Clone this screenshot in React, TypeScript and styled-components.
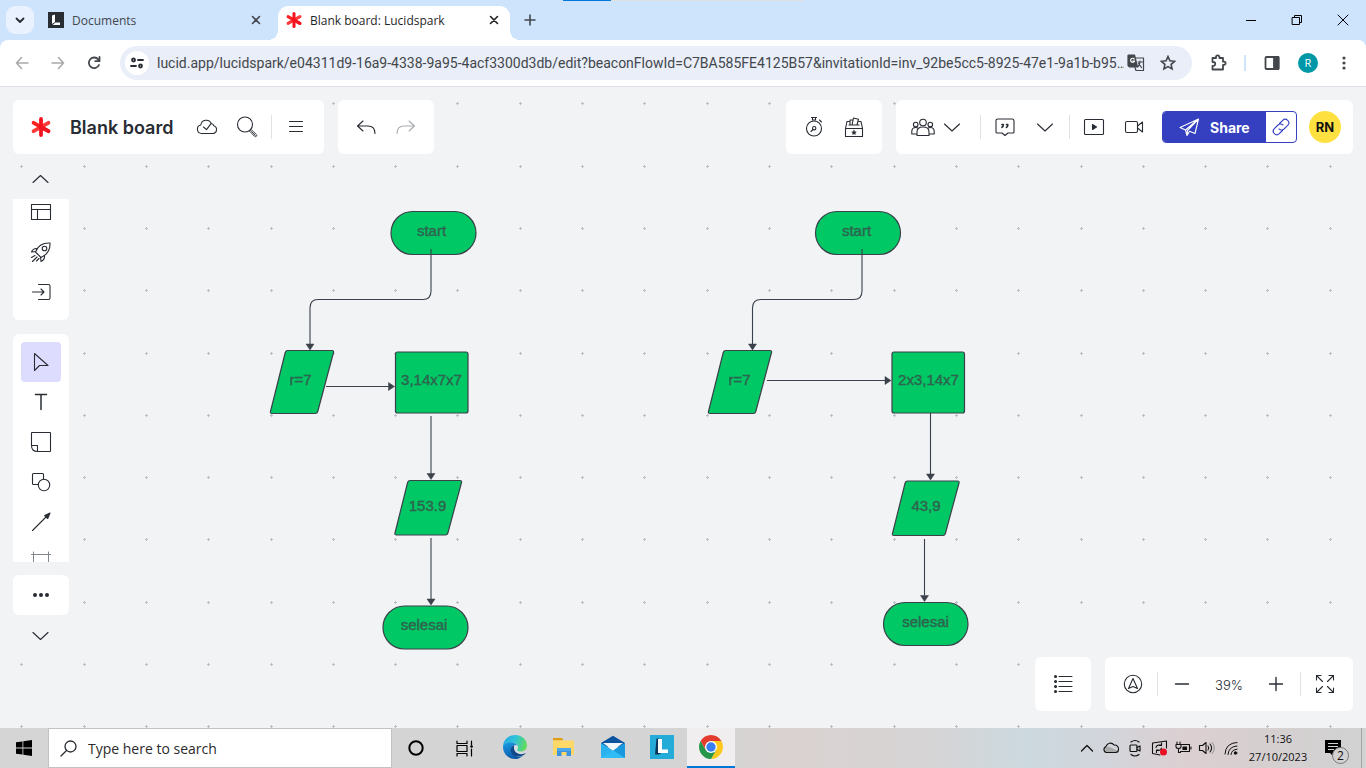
import React from 'react';
import styled, { createGlobalStyle } from 'styled-components';

const GlobalStyle = createGlobalStyle`
  * { box-sizing: border-box; }
  html, body { margin: 0; padding: 0; }
  body { font-family: "Open Sans", "Noto Sans", sans-serif; color: #282c33; }
  button, input { font: inherit; color: inherit; }
  button { border: 0; padding: 0; background: none; cursor: pointer; }
  svg { display: block; flex: none; }
`;

const Page = styled.div`
  min-height: 100vh;
  display: flex;
  flex-direction: column;
`;

/* ---------- browser ---------- */

const TabStrip = styled.header`
  position: relative;
  display: flex;
  align-items: center;
  height: 40px;
  background: #cee3fc;
`;

const LoadBar = styled.div`
  position: absolute;
  top: 0;
  left: 563px;
  width: 241px;
  height: 1px;
  background: linear-gradient(90deg, #0078d7 20%, #dfe0e0 20%);
`;

const IconButton = styled.button<{ $w?: number; $h?: number; $color?: string }>`
  display: flex;
  flex: none;
  align-items: center;
  justify-content: center;
  width: ${p => p.$w ?? 40}px;
  height: ${p => p.$h ?? 40}px;
  color: ${p => p.$color ?? '#282c33'};
`;

const TabSearch = styled(IconButton)`
  margin: 0 6px;
  border-radius: 9px;
  background: #e8f1fd;
`;

const Tab = styled.div<{ $active?: boolean }>`
  position: relative;
  display: flex;
  align-items: center;
  gap: 8px;
  width: ${p => (p.$active ? 232 : 238)}px;
  height: 34px;
  margin-top: 6px;
  padding: 0 ${p => (p.$active ? 8 : 14)}px 6px 8px;
  border-radius: 10px 10px 0 0;
  background: ${p => (p.$active ? '#fff' : 'transparent')};
  color: ${p => (p.$active ? '#1f1f1f' : '#42474e')};
  font-size: 12px;
  line-height: 16px;
  ${p =>
    p.$active &&
    `
    &::before, &::after {
      content: '';
      position: absolute;
      bottom: 0;
      width: 10px;
      height: 10px;
    }
    &::before { left: -10px; background: radial-gradient(circle at 0 0, transparent 10px, #fff 10px); }
    &::after { right: -10px; background: radial-gradient(circle at 100% 0, transparent 10px, #fff 10px); }
  `}
`;

const TabTitle = styled.span`
  flex: 1;
  padding-top: 1px;
  white-space: nowrap;
`;

const Spacer = styled.div`
  flex: 1;
`;

const ToolbarBack = styled.div`
  background: #cee3fc;
`;

const BrowserBar = styled.div`
  display: flex;
  align-items: center;
  height: 47px;
  padding: 0 4px;
  border-bottom: 1px solid #dcdfe3;
  border-radius: 8px 8px 0 0;
  background: #fff;
`;

const Omnibox = styled.div`
  display: flex;
  flex: 1;
  align-items: center;
  height: 34px;
  min-width: 0;
  margin: 0 9px 0 8px;
  padding: 0 4px 0 5px;
  border-radius: 17px;
  background: #e9eef8;
`;

const SiteButton = styled(IconButton)`
  border-radius: 50%;
  background: #fff;
`;

const UrlInput = styled.input`
  flex: 1;
  min-width: 0;
  margin-left: 8px;
  padding: 0;
  border: 0;
  outline: 0;
  background: transparent;
  color: #43474c;
  font-family: Roboto, sans-serif;
  font-size: 14px;
  line-height: 20px;
`;

const BarDivider = styled.div`
  width: 2px;
  height: 16px;
  margin: 0 8px 0 7px;
  background: #cee3fc;
`;

const Profile = styled.span`
  width: 20px;
  height: 20px;
  border-radius: 50%;
  background: #0097a7;
  color: #fff;
  font-size: 11px;
  line-height: 20px;
  text-align: center;
`;

/* ---------- board ---------- */

const Board = styled.main`
  position: relative;
  display: flex;
  flex: 1;
  flex-direction: column;
  padding: 13px 13px 17px;
  overflow: hidden;
  background: #f1f3f5;
  font-family: Inter, "Liberation Sans", sans-serif;
`;

const Drawing = styled.svg`
  position: absolute;
  inset: 0;
  width: 100%;
  height: 100%;
`;

const NodeLabel = styled.text`
  font-family: "Liberation Sans", Arial, sans-serif;
  font-size: 15px;
  fill: #2f644f;
  stroke: #2f644f;
  stroke-width: 0.4;
  text-anchor: middle;
`;

const Row = styled.div<{ $align?: string }>`
  position: relative;
  display: flex;
  align-items: ${p => p.$align ?? 'center'};
  justify-content: space-between;
`;

const BodyRow = styled(Row)`
  flex: 1;
`;

const Group = styled.div`
  display: flex;
  gap: 14px;
`;

const Panel = styled.div<{ $end?: number }>`
  display: flex;
  align-items: center;
  height: 54px;
  padding: 0 ${p => p.$end ?? 8}px 0 8px;
  border-radius: 6px;
  background: #fff;
`;

const BoardTitle = styled.h1`
  width: 117px;
  margin: 0 0 0 9px;
  padding-top: 2px;
  color: #282c33;
  font-size: 18px;
  font-weight: 600;
  line-height: 24px;
  white-space: nowrap;
`;

const Divider = styled.div<{ $before?: number }>`
  width: 1px;
  height: 24px;
  margin: 0 4px 0 ${p => p.$before ?? 4}px;
  background: #dfe3e8;
`;

const ShareGroup = styled.div`
  display: flex;
  height: 32px;
  margin: 0 12px 0 8px;
  overflow: hidden;
  border: 1px solid #3440c0;
  border-radius: 4px;
`;

const ShareButton = styled.button`
  display: flex;
  align-items: center;
  gap: 10px;
  width: 103px;
  padding-left: 16px;
  background: #3440c0;
  color: #fff;
  font-size: 14px;
  font-weight: 700;
`;

const Avatar = styled.button`
  width: 32px;
  height: 32px;
  border-radius: 50%;
  background: #ffe041;
  color: #111;
  font-size: 13px;
  font-weight: 700;
`;

const Rail = styled.nav`
  display: flex;
  flex-direction: column;
  align-self: flex-start;
  align-items: center;
  width: 56px;
  padding-top: 5px;
`;

const ToolGroup = styled.div<{ $edge: 'top' | 'bottom' }>`
  display: flex;
  flex-direction: column;
  align-items: center;
  width: 56px;
  padding: ${p => (p.$edge === 'top' ? '0 0 8px' : '8px 0 0')};
  border-radius: ${p => (p.$edge === 'top' ? '0 0 6px 6px' : '6px 6px 0 0')};
  margin-bottom: ${p => (p.$edge === 'top' ? 14 : 13)}px;
  background: #fff;
`;

const Tool = styled(IconButton)<{ $on?: boolean; $cut?: 'top' | 'bottom' }>`
  height: ${p => (p.$cut === 'top' ? 33 : p.$cut === 'bottom' ? 20 : 40)}px;
  align-items: ${p => (p.$cut === 'top' ? 'flex-end' : p.$cut === 'bottom' ? 'flex-start' : 'center')};
  padding: ${p => (p.$cut === 'top' ? '0 0 8px' : p.$cut === 'bottom' ? '8px 0 0' : '0')};
  overflow: hidden;
  border-radius: 4px;
  background: ${p => (p.$on ? '#dddcff' : 'transparent')};
`;

const MoreButton = styled(IconButton)`
  border-radius: 6px;
  background: #fff;
`;

const BottomPanels = styled(Group)`
  align-self: flex-end;
`;

const ZoomLevel = styled.output`
  width: 54px;
  padding-top: 2px;
  color: #282c33;
  font-size: 13px;
  font-weight: 300;
  text-align: center;
`;

/* ---------- taskbar ---------- */

const Taskbar = styled.footer`
  display: flex;
  align-items: center;
  height: 40px;
  background: linear-gradient(90deg, #d5d5d5 0%, #d4d4d4 52%, #dad2d1 58%, #d6d4d5 68%, #ccd9df 75%, #d2d5db 81%, #dccfd1 87%, #d6cfd0 92%, #d1d2d2 100%);
`;

const SearchBox = styled.label`
  display: flex;
  align-items: center;
  gap: 11px;
  width: 344px;
  height: 40px;
  padding-left: 11px;
  border: 1px solid #c2c2c2;
  background: #fff;
`;

const SearchInput = styled.input`
  flex: 1;
  min-width: 0;
  padding: 2px 0 0;
  border: 0;
  outline: 0;
  background: transparent;
  font-size: 14px;
  line-height: 20px;
  &::placeholder { color: #2b2b2b; opacity: 1; }
`;

const Apps = styled.div`
  display: flex;
  gap: 1px;
  margin-left: 3px;
`;

const AppButton = styled(IconButton)<{ $active?: boolean }>`
  border-bottom: 2px solid ${p => (p.$active ? '#0078d7' : 'transparent')};
  background: ${p => (p.$active ? '#f0eeee' : 'transparent')};
`;

const Clock = styled.time`
  width: 70px;
  color: #111;
  font-size: 11px;
  line-height: 18px;
  text-align: center;
`;

const NoticeButton = styled(IconButton)`
  position: relative;
`;

const NoticeCount = styled.span`
  position: absolute;
  right: 12px;
  bottom: 4px;
  width: 17px;
  height: 17px;
  border: 1px solid #777;
  border-radius: 50%;
  background: #d3d1d2;
  color: #111;
  font-size: 12px;
  line-height: 15px;
  text-align: center;
`;

const ShowDesktop = styled.button`
  width: 5px;
  height: 40px;
  border-left: 1px solid #a2a2a2;
`;

/* ---------- icons ---------- */

type LineProps = { size?: number; sw?: number; children: React.ReactNode };

/* Stroke icon on a square grid as wide as it is drawn. */
const Line = ({ size = 24, sw = 1.1, children }: LineProps) => (
  <svg width={size} height={size} viewBox={`0 0 ${size} ${size}`} fill="none" stroke="currentColor"
    strokeWidth={sw} strokeLinecap="round" strokeLinejoin="round" aria-hidden="true">
    {children}
  </svg>
);

const Asterisk = ({ size }: { size: number }) => (
  <svg width={size} height={size} viewBox="0 0 20 20" fill="none" strokeWidth="3.8" strokeLinecap="round" aria-hidden="true">
    <path d="M2.600 14.200 17.400 5.800" stroke="#ff3a3a" />
    <path d="M2.600 5.800 17.400 14.200" stroke="#ff2020" />
    <path d="M10 2v16" stroke="#f5141d" />
    <path d="M12 11.200l5.400 3" stroke="#ee1620" />
  </svg>
);

const Close = () => <Line size={10} sw={1.6}><path d="M1.500 1.500l7 7M8.500 1.500l-7 7" /></Line>;
const ChevronDown = () => <Line size={18}><path d="M1.500 6 9 13l7.500-7" /></Line>;

const Edge = () => (
  <svg width="24" height="24" viewBox="0 0 24 24" aria-hidden="true">
    <defs>
      <linearGradient id="edgeTop" x1="0" y1="0.3" x2="1" y2="0.5">
        <stop offset="0" stopColor="#2aa9e4" /><stop offset=".5" stopColor="#2fc3d6" /><stop offset="1" stopColor="#65dc57" />
      </linearGradient>
      <linearGradient id="edgeLow" x1="0" y1="0" x2="0.4" y2="1">
        <stop offset="0" stopColor="#1c9be6" /><stop offset="1" stopColor="#0b5aa8" />
      </linearGradient>
    </defs>
    <path d="M0 12C0 5.400 5.400 0 12 0s12 4.800 12 10.300c0 3.900-2.900 6.300-6 6.300-2.400 0-4-.8-4-1.700 0-.7 1-1.200 1-2.900 0-2.300-2.400-4.200-5.800-4.200C4.500 7.800.8 10 0 12z" fill="url(#edgeTop)" />
    <path d="M0 12c.6-2.600 3.800-4.600 8-4.500 3.200 0 6.200 1.600 6.600 4-1-1.200-2-1.400-3-1.200-4 .9-4.300 6-1.400 9 2.300 2.400 5.800 3 9.300 1.600C17.500 22.800 14.900 24 12 24 5.400 24 0 18.600 0 12z" fill="url(#edgeLow)" />
    <path d="M11.600 10.300c-4.500 1-5 6.400-1.800 9.400 3 2.700 8.700 2.600 12.500-.6.400-.4.100-1-.5-.7-3.600 1.500-7.400.7-9.300-1.800-1.500-2-1.800-4.500-.9-6.300z" fill="#114a8b" />
    <path d="M11.600 10.300c-1.200 2.500-.3 5.300 1.700 7.300 2.300 1.200 5.500.8 7-.6-3.600 0-6.300-.8-6.300-2 0-.7 1-1.300 1-3-.6-1.400-2-2-3.400-1.700z" fill="#d7dfe4" />
  </svg>
);

const Explorer = () => (
  <svg width="24" height="24" viewBox="0 0 24 24" aria-hidden="true">
    <path d="M1 3h9l1.500 2.500H1z" fill="#e09d13" />
    <path d="M1 5.500h21V20H1z" fill="#ffd868" />
    <path d="M5 13h14v8h-4.500v-4h-5v4H5z" fill="#3d93dc" />
    <path d="M5 13h14v3H5z" fill="#4aa8ef" />
  </svg>
);

const Mail = () => (
  <svg width="24" height="24" viewBox="0 0 24 24" aria-hidden="true">
    <path d="M0 8 12 .8 24 8v4H0z" fill="#0b539f" />
    <path d="M0 8l12 7.500L24 8v15H0z" fill="#2bb2ee" />
    <path d="M24 8 12 15.500 24 23z" fill="#1a98dd" />
    <path d="M12 15.500 24 23H0z" fill="#30bdf5" />
    <path d="M2 8h20l-10 7.500z" fill="#f2f6fa" />
  </svg>
);

const LApp = () => (
  <svg width="24" height="24" viewBox="0 0 24 24" aria-hidden="true">
    <path d="M0 0h24v24H0z" fill="#24abd8" />
    <path d="M6.500 3.500H9v12l2 2.500-2 1.500H5z" fill="#0b3558" />
    <path d="M8 4h4v10.500h6V18H8z" fill="#fff" />
  </svg>
);

const ChromeLogo = () => (
  <svg width="24" height="24" viewBox="0 0 24 24" aria-hidden="true">
    <path d="M12 12V6h10.390A12 12 0 0 1 12 24l5.200-9z" fill="#fdc81e" />
    <path d="M12 12l5.200 3L12 24A12 12 0 0 1 1.610 6l5.200 9z" fill="#26974a" />
    <path d="M1.610 6A12 12 0 0 1 22.390 6H12L6.800 15z" fill="#e33b2e" />
    <circle cx="12" cy="12" r="6" fill="#fff" />
    <circle cx="12" cy="12" r="4.700" fill="#3a7df0" />
  </svg>
);

/* ---------- diagram ---------- */

const GRID_STEP = 62.3;
const INK = '#3a414a';

const gridPath = () => {
  let d = '';
  for (let r = 0; r < 20; r++) {
    for (let c = 0; c < 45; c++) {
      const x = Math.floor(21.9 + c * GRID_STEP);
      const y = Math.floor(16.9 + r * GRID_STEP);
      d += `M${x - 1} ${y}.5h3M${x}.5 ${y - 1}v3`;
    }
  }
  return d;
};

type Shape = { kind: 'pill' | 'box' | 'data'; x: number; y: number; w: number; h: number; label: string; tx: number; ty: number };

const shapes: Shape[] = [
  { kind: 'pill', x: 391, y: 124.5, w: 85, h: 43, label: 'start', tx: 431.5, ty: 149 },
  { kind: 'data', x: 270, y: 263.5, w: 64, h: 63, label: 'r=7', tx: 300.5, ty: 298 },
  { kind: 'box', x: 395.5, y: 265, w: 72.5, h: 61, label: '3,14x7x7', tx: 431.5, ty: 298 },
  { kind: 'data', x: 394.5, y: 393.5, w: 67.5, h: 54.5, label: '153.9', tx: 427.5, ty: 424 },
  { kind: 'pill', x: 383, y: 519, w: 85, h: 43, label: 'selesai', tx: 424, ty: 543 },
  { kind: 'pill', x: 815.5, y: 124.5, w: 85, h: 43, label: 'start', tx: 856.5, ty: 149 },
  { kind: 'data', x: 708, y: 263.5, w: 64, h: 63, label: 'r=7', tx: 739.5, ty: 298 },
  { kind: 'box', x: 892, y: 265, w: 72.5, h: 61, label: '2x3,14x7', tx: 928.5, ty: 298 },
  { kind: 'data', x: 892, y: 394, w: 67.5, h: 54.5, label: '43,9', tx: 926, ty: 424 },
  { kind: 'pill', x: 883.5, y: 515.5, w: 84.5, h: 43, label: 'selesai', tx: 925.5, ty: 540 },
];

const connectors = [
  'M431 162v42q0 8.500-8 8.500H318q-8 0-8 8.500v36',
  'M326 299.500h63',
  'M431 329v58',
  'M431 451v61',
  'M862 162v42q0 8.500-8 8.500h-93q-8.500 0-8.500 8.500v36',
  'M767 293.500h119',
  'M930.500 326v61',
  'M924.500 452v56',
];

const heads = [
  'M306 257h8l-4 6z',
  'M388.500 295.500v8l6-4z',
  'M427 386.500h8l-4 6z',
  'M427 512h8l-4 6z',
  'M748.500 257h8l-4 6z',
  'M885 289.500v8l6-4z',
  'M926.500 387h8l-4 6z',
  'M920.500 508.500h8l-4 6z',
];

/* Parallelogram that leans by a quarter of its height, with eased corners. */
const leaning = ({ x, y, w, h }: Shape) => {
  const s = h / 4;
  return `M${x + s + 2} ${y}H${x + w - 2}q2 0 1.500 2L${x + w - s - 0.5} ${y + h - 2}q-.5 2-2.500 2H${x + 2}q-2 0-1.500-2L${x + s - 0.5} ${y + 2}q.5-2 2.500-2z`;
};

const Diagram = () => (
  <Drawing aria-label="Flowchart">
    <path d={gridPath()} stroke="#a9adb2" strokeWidth="1" opacity=".75" />
    {shapes.map((s, i) => (
      <g key={i} fill="#00c865" stroke={INK} strokeWidth="1.2">
        {s.kind === 'data'
          ? <path d={leaning(s)} />
          : <rect x={s.x} y={s.y} width={s.w} height={s.h} rx={s.kind === 'pill' ? 21.5 : 2} />}
      </g>
    ))}
    {connectors.map(d => <path key={d} d={d} fill="none" stroke={INK} strokeWidth="1.1" />)}
    {heads.map(d => <path key={d} d={d} fill={INK} stroke={INK} strokeWidth=".5" />)}
    {shapes.map((s, i) => <NodeLabel key={i} x={s.tx} y={s.ty}>{s.label}</NodeLabel>)}
  </Drawing>
);

/* ---------- sections ---------- */

const Browser = () => (
  <>
    <TabStrip>
      <LoadBar />
      <TabSearch $w={28} $h={28} aria-label="Search tabs"><Line size={10} sw={1.8}><path d="M1.500 3.500 5 7l3.500-3.500" /></Line></TabSearch>
      <Tab>
        <svg width="16" height="16" viewBox="0 0 16 16" aria-hidden="true">
          <path d="M0 0h16v16H0z" fill="#282c33" />
          <path d="M4 3.500l3-1v7.500l-3 2zM4.500 13l3-2.500H12V13z" fill="#fff" />
        </svg>
        <TabTitle>Documents</TabTitle>
        <IconButton $w={16} $h={16} $color="#42474e" aria-label="Close Documents"><Close /></IconButton>
      </Tab>
      <Tab $active>
        <Asterisk size={16} />
        <TabTitle>Blank board: Lucidspark</TabTitle>
        <IconButton $w={16} $h={16} $color="#1f1f1f" aria-label="Close Blank board"><Close /></IconButton>
      </Tab>
      <IconButton aria-label="New tab" $color="#42474e"><Line size={12} sw={1.6}><path d="M6 1v10M1 6h10" /></Line></IconButton>
      <Spacer />
      <IconButton $w={46} $color="#000" aria-label="Minimise"><Line size={10} sw={1}><path d="M0 5.500h10" /></Line></IconButton>
      <IconButton $w={46} $color="#000" aria-label="Restore"><Line size={12} sw={1}><path d="M1.500 3.500h7v7h-7zM3.500 3.500v-2h7v7h-2" /></Line></IconButton>
      <IconButton $w={46} $color="#000" aria-label="Close window"><Line size={12} sw={1}><path d="M1 1l10 10M11 1 1 11" /></Line></IconButton>
    </TabStrip>
    <ToolbarBack>
      <BrowserBar>
        <IconButton $w={36} $h={36} $color="#a8aaac" aria-label="Back"><Line size={14} sw={1.6}><path d="M13 7H1.500M6.500 1.500 1.500 7l5 5.500" /></Line></IconButton>
        <IconButton $w={36} $h={36} $color="#a8aaac" aria-label="Forward"><Line size={14} sw={1.6}><path d="M1 7h11.500M7.500 1.500l5 5.500-5 5.500" /></Line></IconButton>
        <IconButton $w={36} $h={36} $color="#43474c" aria-label="Reload"><Line size={14} sw={1.8}><path d="M12 9A5.300 5.300 0 1 1 11.300 3.500L12.500 5M12.500 1v4.200H8.300" /></Line></IconButton>
        <Omnibox>
          <SiteButton $w={24} $h={24} aria-label="Site information">
            <Line size={14} sw={1.8}><circle cx="3.500" cy="4" r="1.500" /><path d="M8 4h5M1 10h5" /><circle cx="10.500" cy="10" r="1.500" /></Line>
          </SiteButton>
          <UrlInput aria-label="Address" readOnly value="lucid.app/lucidspark/e04311d9-16a9-4338-9a95-4acf3300d3db/edit?beaconFlowId=C7BA585FE4125B57&invitationId=inv_92be5cc5-8925-47e1-9a1b-b95…" />
          <IconButton $w={24} $h={32} $color="#43474c" aria-label="Translate this page">
            <Line size={18} sw={1.2}>
              <path d="M1.500 1h6l3 12H2.500L1 11.500v-10z" fill="currentColor" />
              <path d="M9 4h7.500v12.500H9l-1-3M11 8h4.500M13 7v1c0 2-1 3.500-2 4.500M11.500 9.500l3 4" />
              <path d="M7.200 5A2 2 0 1 0 7.500 7H5.800" stroke="#fff" />
            </Line>
          </IconButton>
          <IconButton $w={40} $h={32} $color="#43474c" aria-label="Bookmark this tab">
            <Line size={16} sw={1.6}><path d="M8 1.500l1.900 4.300 4.700.5-3.500 3.100 1 4.600L8 11.600 3.900 14l1-4.600L1.400 6.300l4.700-.5z" strokeLinejoin="miter" /></Line>
          </IconButton>
        </Omnibox>
        <IconButton $w={36} $h={36} $color="#43474c" aria-label="Extensions">
          <Line size={18} sw={1.8}><path d="M2.500 4H6V3a1.700 1.700 0 0 1 3.400 0v1H13v3.700h1a1.600 1.600 0 0 1 0 3.200h-1v4.600H2.500v-3.700h.8a1.900 1.900 0 0 0 0-3.800h-.8z" /></Line>
        </IconButton>
        <BarDivider />
        <IconButton $w={36} $h={36} $color="#43474c" aria-label="Side panel">
          <Line size={16} sw={1.8}><rect x="1.500" y="2" width="13" height="12" rx="1" /><path d="M10 2h4.500v12H10z" fill="currentColor" /></Line>
        </IconButton>
        <IconButton $w={36} $h={36} aria-label="Profile"><Profile>R</Profile></IconButton>
        <IconButton $w={36} $h={36} $color="#43474c" aria-label="Browser menu">
          <Line size={16} sw={0}><g fill="currentColor"><circle cx="8" cy="3" r="1.600" /><circle cx="8" cy="8" r="1.600" /><circle cx="8" cy="13" r="1.600" /></g></Line>
        </IconButton>
      </BrowserBar>
    </ToolbarBack>
  </>
);

const BoardHeader = () => (
  <Row>
    <Group>
      <Panel>
        <IconButton aria-label="Lucidspark home"><Asterisk size={20} /></IconButton>
        <BoardTitle>Blank board</BoardTitle>
        <IconButton aria-label="Saved">
          <Line><path d="M6.500 18.500a4.300 4.300 0 0 1-.7-8.500 5.500 5.500 0 0 1 10.600-1.200c1.200 0 2 .8 2.300 1.900a4 4 0 0 1-.7 7.800zM8.500 12l3 2.700 4.500-6" /></Line>
        </IconButton>
        <IconButton aria-label="Search">
          <Line><circle cx="10" cy="9.500" r="7.500" /><path d="M14.800 15.800l1.400-1.300 5.200 5q.8 1 0 1.800t-1.800 0zM16.500 16.500l3.800 3.800" strokeWidth=".9" /></Line>
        </IconButton>
        <Divider />
        <IconButton aria-label="Menu"><Line size={16}><path d="M1.500 2.500h13M1.500 7.500h13M1.500 12.500h13" /></Line></IconButton>
      </Panel>
      <Panel>
        <IconButton aria-label="Undo"><Line><path d="M9 6l-5.500 5L9 16M3.500 11H14q7 0 7 7.500" /></Line></IconButton>
        <IconButton $color="#a9adb3" aria-label="Redo"><Line><path d="M15 6l5.500 5-5.500 5M20.500 11H10q-7 0-7 7.500" /></Line></IconButton>
      </Panel>
    </Group>
    <Group>
      <Panel>
        <IconButton aria-label="Timer">
          <Line><circle cx="12" cy="13.500" r="7.500" /><path d="M9.500 2.500h5M10.500 2.500V5h3V2.500M17.500 5l2 2M9 16.500l2-2" /><circle cx="12.200" cy="13.200" r="1.700" /></Line>
        </IconButton>
        <IconButton aria-label="Activities">
          <Line><path d="M3.500 13.500h17v8h-17zM3.500 13.500 5 6.500h2M20.500 13.500 19 6.500h-2M7 10h10M8 10V5h3M10 10l1.500-7 5 1.200L15 10" /><path d="M12 15.200l.7 1.500 1.600.2-1.200 1.100.3 1.600-1.400-.8-1.400.8.300-1.600-1.200-1.100 1.600-.2z" fill="currentColor" strokeWidth=".5" /></Line>
        </IconButton>
      </Panel>
      <Panel $end={12}>
        <IconButton $w={38} aria-label="Collaborators">
          <Line><circle cx="12" cy="7.500" r="3.300" /><circle cx="4.700" cy="9.500" r="2.300" /><circle cx="19.300" cy="9.500" r="2.300" /><path d="M6 20.500v-3.500q0-5 6-5t6 5v3.500zM6 19H.8v-2.500q0-4 4-4 1.500 0 2.200.7M18 19h5.200v-2.500q0-4-4-4-1.500 0-2.200.7" /></Line>
        </IconButton>
        <IconButton $w={20} aria-label="Collaborator options"><ChevronDown /></IconButton>
        <Divider $before={18} />
        <IconButton aria-label="Comments">
          <Line><path d="M5 4h14q2 0 2 2v11q0 1-1 1h-5l-3 2.500L9 18H4q-1 0-1-1V5q0-1 2-1z" /><path d="M9 9.500h1.200v.8q0 1.500-1.200 2M13.500 9.500h1.200v.8q0 1.500-1.200 2" strokeWidth="1.700" /></Line>
        </IconButton>
        <IconButton aria-label="Comment options"><ChevronDown /></IconButton>
        <Divider />
        <IconButton aria-label="Present">
          <Line><rect x="2.500" y="4.500" width="19" height="15" rx="1" /><path d="M10.500 9.500v5l4-2.500z" fill="currentColor" /></Line>
        </IconButton>
        <IconButton aria-label="Video call">
          <Line><rect x="3.500" y="6.500" width="12" height="11" rx="1.500" /><path d="M15.500 11l5-4v10l-5-4" /></Line>
        </IconButton>
        <ShareGroup>
          <ShareButton>
            <Line size={21}><path d="M1 10.500 19.500 2l-3.500 14.500-5.500-2.300L8 18.500l-1.500-5.500zM6.500 13 19.500 2 8.500 13.500 8 18.500" /></Line>
            Share
          </ShareButton>
          <IconButton $w={30} $h={30} $color="#3440c0" aria-label="Copy link">
            <Line size={20}><path d="M8.500 6.500l3.200-3.200a3.400 3.400 0 0 1 5 5L13 12q-2.500 2-5 0M11.500 13.500l-3.200 3.200a3.400 3.400 0 0 1-5-5L7 8q2.500-2 5 0" /></Line>
          </IconButton>
        </ShareGroup>
        <Avatar>RN</Avatar>
      </Panel>
    </Group>
  </Row>
);

const ToolRail = () => (
  <Rail aria-label="Tools">
    <IconButton aria-label="Scroll up"><Line size={18}><path d="M1 12.500 8.500 5.500l7.500 7" /></Line></IconButton>
    <ToolGroup $edge="top">
      <Tool $cut="top" aria-label="Templates">
        <Line><path d="M2.500 4.500h19v15h-19zM2.500 9.500h19M8.500 9.500v10" /></Line>
      </Tool>
      <Tool aria-label="Quick start">
        <Line><path d="M6.500 12Q10 2.500 21 3q.5 10-9 14.500zM8.500 8.500Q4 8 2.500 12l4-.5M15.500 15.500q.5 4-3.500 6l-.5-4.500M6 15.500l-3.500 2M8 17l-4.500 4.500M10 18.500 7.500 21" /><circle cx="15.500" cy="8.500" r="2.300" /></Line>
      </Tool>
      <Tool aria-label="Import">
        <Line><path d="M9.500 4.500h10q1.500 0 1.500 1.500v12q0 1.500-1.500 1.500h-10M3.500 12H15M12 9l3 3-3 3" /></Line>
      </Tool>
    </ToolGroup>
    <ToolGroup $edge="bottom">
      <Tool $on aria-label="Select"><Line><path d="M5.500 3.500v17l5-5h8.500z" /></Line></Tool>
      <Tool aria-label="Text"><Line sw={1.5}><path d="M6.500 4.500h11M12 4.500v15" /></Line></Tool>
      <Tool aria-label="Sticky note"><Line><path d="M3 2.500h18q.5 0 .5.500v18q0 .5-.5.500H8.500q-6 0-6-6V3q0-.5.500-.5zM2.500 15.500h6v6" /></Line></Tool>
      <Tool aria-label="Shapes"><Line><path d="M9 14.500H4.500q-1 0-1-1v-9q0-1 1-1h9q1 0 1 1V9" /><circle cx="15" cy="15" r="5.700" /></Line></Tool>
      <Tool aria-label="Line"><Line><path d="M3.500 20.500 18 6" /><path d="M21 3l-2.300 5.500-3-3z" fill="currentColor" /></Line></Tool>
      <Tool $cut="bottom" aria-label="Measure"><Line size={22} sw={1}><path d="M3.500 2v16M18.500 2v16M1.500 4.500h19" stroke="#83888e" /></Line></Tool>
    </ToolGroup>
    <MoreButton $w={56} aria-label="More tools">
      <Line sw={0}><g fill="currentColor"><circle cx="6" cy="12" r="2" /><circle cx="12" cy="12" r="2" /><circle cx="18" cy="12" r="2" /></g></Line>
    </MoreButton>
    <IconButton aria-label="Scroll down"><Line size={18}><path d="M1 6.500l7.500 7 7.500-7" /></Line></IconButton>
  </Rail>
);

const ViewControls = () => (
  <BottomPanels>
    <Panel>
      <IconButton aria-label="Outline">
        <Line><path d="M8 4.500h13M8 9.500h13M8 14.500h13M8 19.500h13" /><path d="M4.500 4.500h.1M4.500 9.500h.1M4.500 14.500h.1M4.500 19.500h.1" strokeWidth="3" /></Line>
      </IconButton>
    </Panel>
    <Panel>
      <IconButton aria-label="Navigator">
        <Line><circle cx="12" cy="12" r="8.700" /><path d="M12 6.500l4.500 10L12 14.500l-4.500 2z" /></Line>
      </IconButton>
      <Divider />
      <IconButton aria-label="Zoom out"><Line size={16} sw={1.4}><path d="M1.500 8h13" /></Line></IconButton>
      <ZoomLevel>39%</ZoomLevel>
      <IconButton aria-label="Zoom in"><Line size={16} sw={1.4}><path d="M1.500 8h13M8 1.500v13" /></Line></IconButton>
      <Divider />
      <IconButton aria-label="Full screen">
        <Line size={20}><path d="M1.500 6V1.500H6M1.500 1.500l6 6M14 1.500h4.500V6M18.500 1.500l-6 6M1.500 14v4.500H6M1.500 18.500l6-6M18.500 14v4.500H14M18.500 18.500l-6-6" /></Line>
      </IconButton>
    </Panel>
  </BottomPanels>
);

const SystemBar = () => (
  <Taskbar>
    <IconButton $w={48} $color="#000" aria-label="Start">
      <svg width="16" height="16" viewBox="0 0 16 16" fill="currentColor" aria-hidden="true">
        <path d="M0 2.300l6.500-.9v6.200H0zM7.300 1.300 16 0v7.600H7.300zM0 8.400h6.500v6.200L0 13.700zM7.300 8.400H16V16l-8.700-1.300z" />
      </svg>
    </IconButton>
    <SearchBox>
      <Line size={17} sw={1.3}><circle cx="10.500" cy="6.500" r="5.500" /><path d="M6.500 10.500 1 16" /></Line>
      <SearchInput placeholder="Type here to search" aria-label="Type here to search" />
    </SearchBox>
    <IconButton $w={48} $color="#000" aria-label="Cortana"><Line size={16} sw={2}><circle cx="8" cy="8" r="6.700" /></Line></IconButton>
    <IconButton $w={48} $color="#000" aria-label="Task view">
      <Line size={17} sw={1.2}><path d="M1 1v2.500h10V1M1 16v-2.500h10V16M1 5.500h10v6H1zM15.500 1v4M15.500 9v7" /><path d="M15.500 6.500h.1" strokeWidth="2.500" /></Line>
    </IconButton>
    <Apps>
      <AppButton $w={48} aria-label="Edge"><Edge /></AppButton>
      <AppButton $w={48} aria-label="File Explorer"><Explorer /></AppButton>
      <AppButton $w={48} aria-label="Mail"><Mail /></AppButton>
      <AppButton $w={48} aria-label="L app"><LApp /></AppButton>
      <AppButton $w={48} $active aria-label="Chrome"><ChromeLogo /></AppButton>
    </Apps>
    <Spacer />
    <IconButton $w={24} $color="#111" aria-label="Hidden icons"><Line size={14} sw={1.3}><path d="M1.500 10 7 4.500l5.500 5.500" /></Line></IconButton>
    <IconButton $w={24} $color="#111" aria-label="OneDrive">
      <Line size={18} sw={1.1}>
        <path d="M3 8q4-1 8 1.500l5 2.500q-.5 1.500-2.500 1.500H4Q1 13 1.500 10q.5-1.500 1.500-2z" fill="#a9a9a9" stroke="none" />
        <path d="M4 13.500a3.200 3.200 0 0 1 0-6 4.500 4.500 0 0 1 8-1.500 4 4 0 0 1 4.500 4.500q0 3-3 3z" />
      </Line>
    </IconButton>
    <IconButton $w={24} $color="#111" aria-label="Meet now">
      <Line size={18} sw={1.2}><rect x="4" y="6" width="7" height="6.500" rx="1" /><path d="M11 8.500l3-1.500v5l-3-1.500M5 3q4-3 8 0M5 15.500q4 3 8 0" /></Line>
    </IconButton>
    <IconButton $w={24} $color="#111" aria-label="Updates">
      <Line size={18} sw={1.1}><path d="M16.500 9V2l-14 2v10.500L10 16M6 8.500q.5-2.500 3-2.500h2.500M11.500 4v2.500H9.500M11.500 9q-.5 2.500-3 2.500H6.500M6.500 13.500V11H8.500" /><circle cx="13.500" cy="13" r="3.500" fill="#e81123" stroke="none" /></Line>
    </IconButton>
    <IconButton $w={24} $color="#111" aria-label="Battery">
      <Line size={18} sw={1.1}><path d="M7.500 5.500h8v7h-9M17 8v2M3 3v2.500M6 3v2.500M2 5.500h5V8q-.5 1.500-2.500 1.500T2 8zM4.500 9.500v4h2" /><path d="M9 8h3.500v2.500H9z" fill="currentColor" /></Line>
    </IconButton>
    <IconButton $w={24} $color="#111" aria-label="Volume">
      <Line size={18} sw={1.1}><path d="M1.500 6.500h3l3.500-3v11l-3.500-3h-3zM10 7q1.500 2 0 4M12 5q3.200 4 0 8" /><path d="M14.200 3.500q4.200 5.500 0 11" stroke="#999" /></Line>
    </IconButton>
    <IconButton $w={24} $color="#111" aria-label="Network">
      <Line size={16} sw={1}><path d="M2 14Q2.500 3 14 2.500M5 14.500Q5.500 6.500 14 6M8 14.500Q8.500 9.500 14 9.300" /><circle cx="12.500" cy="13" r="1.300" fill="currentColor" /></Line>
    </IconButton>
    <Clock>11:36<br />27/10/2023</Clock>
    <NoticeButton $w={48} $color="#000" aria-label="Notifications">
      <svg width="26" height="22" viewBox="0 0 26 22" aria-hidden="true">
        <path d="M1 3h16v13H9v3l-3-3H1z" fill="#000" />
        <path d="M4 6.500h10M4 9.500h10M4 12.500h6" stroke="#d3d1d2" />
      </svg>
      <NoticeCount>2</NoticeCount>
    </NoticeButton>
    <ShowDesktop aria-label="Show desktop" />
  </Taskbar>
);

export default function App() {
  return (
    <Page>
      <GlobalStyle />
      <Browser />
      <Board>
        <Diagram />
        <BoardHeader />
        <BodyRow>
          <ToolRail />
          <ViewControls />
        </BodyRow>
      </Board>
      <SystemBar />
    </Page>
  );
}
